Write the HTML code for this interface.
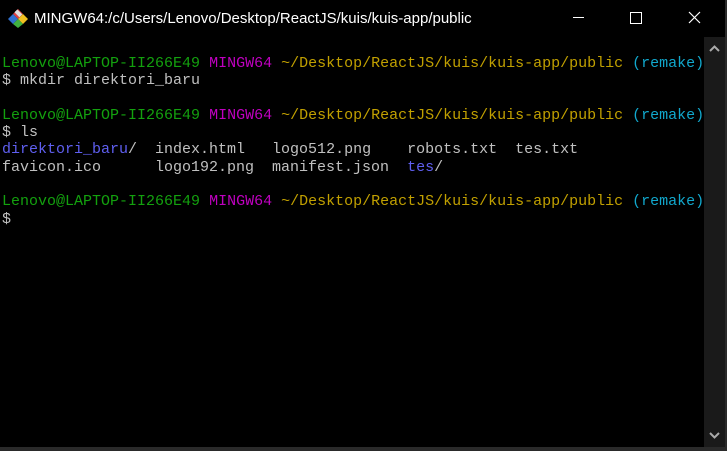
<!DOCTYPE html>
<html><head><style>
body{margin:0;width:727px;height:451px;background:#000;overflow:hidden;position:relative;font-family:"Liberation Mono",monospace;}
.title{position:absolute;left:0;top:0;width:727px;height:37px;background:#000;color:#fff;font-family:"Liberation Sans",sans-serif;font-size:15px;}
.title .t{position:absolute;left:34px;top:10px;}
.term{position:absolute;left:2px;top:55px;font-size:15px;line-height:17.3px;white-space:pre;color:#c0c0c0;}
.g{color:#13a10e}.m{color:#c000c0}.y{color:#c1a000}.c{color:#11a8cd}.b{color:#5f5ff0}
.sb{position:absolute;left:704px;top:37px;width:21px;height:410px;background:#1a1a1a;}
.rb{position:absolute;left:725px;top:0;width:2px;height:451px;background:#2a2a2a;}
.bb{position:absolute;left:0;top:447px;width:727px;height:4px;background:#2a2a2a;}
</style></head><body>
<div class="title">
<svg style="position:absolute;left:8px;top:8px" width="20" height="20" viewBox="0 0 20 20">
<polygon points="10,1 15,6 10,11 5,6" fill="#e04040"/>
<polygon points="5,6 10,11 5,16 0,11" fill="#3070d0"/>
<polygon points="15,6 20,11 15,16 10,11" fill="#f0c020"/>
<polygon points="10,11 15,16 10,20 5,16" fill="#40b040"/>
<rect x="7" y="3" width="7" height="4" fill="#ddd" transform="rotate(45 10 5)"/>
</svg>
<span class="t">MINGW64:/c/Users/Lenovo/Desktop/ReactJS/kuis/kuis-app/public</span>
<div style="position:absolute;left:573px;top:17px;width:11px;height:1px;background:#fff"></div>
<div style="position:absolute;left:630px;top:12px;width:10px;height:10px;border:1px solid #fff"></div>
<svg style="position:absolute;left:688px;top:11px" width="13" height="13"><path d="M1 1L12 12M12 1L1 12" stroke="#fff" stroke-width="1.2"/></svg>
</div>
<div class="term"><span class="g">Lenovo@LAPTOP-II266E49</span> <span class="m">MINGW64</span> <span class="y">~/Desktop/ReactJS/kuis/kuis-app/public</span> <span class="c">(remake)</span>
$ mkdir direktori_baru

<span class="g">Lenovo@LAPTOP-II266E49</span> <span class="m">MINGW64</span> <span class="y">~/Desktop/ReactJS/kuis/kuis-app/public</span> <span class="c">(remake)</span>
$ ls
<span class="b">direktori_baru</span>/  index.html   logo512.png    robots.txt  tes.txt
favicon.ico      logo192.png  manifest.json  <span class="b">tes</span>/

<span class="g">Lenovo@LAPTOP-II266E49</span> <span class="m">MINGW64</span> <span class="y">~/Desktop/ReactJS/kuis/kuis-app/public</span> <span class="c">(remake)</span>
$</div>
<div class="sb">
<svg style="position:absolute;left:5px;top:8px" width="11" height="7"><path d="M1 6L5.5 1.5L10 6" stroke="#aaa" stroke-width="2" fill="none"/></svg>
<svg style="position:absolute;left:5px;top:395px" width="11" height="7"><path d="M1 1L5.5 5.5L10 1" stroke="#aaa" stroke-width="2" fill="none"/></svg>
</div>
<div class="rb"></div><div class="bb"></div>
</body></html>
